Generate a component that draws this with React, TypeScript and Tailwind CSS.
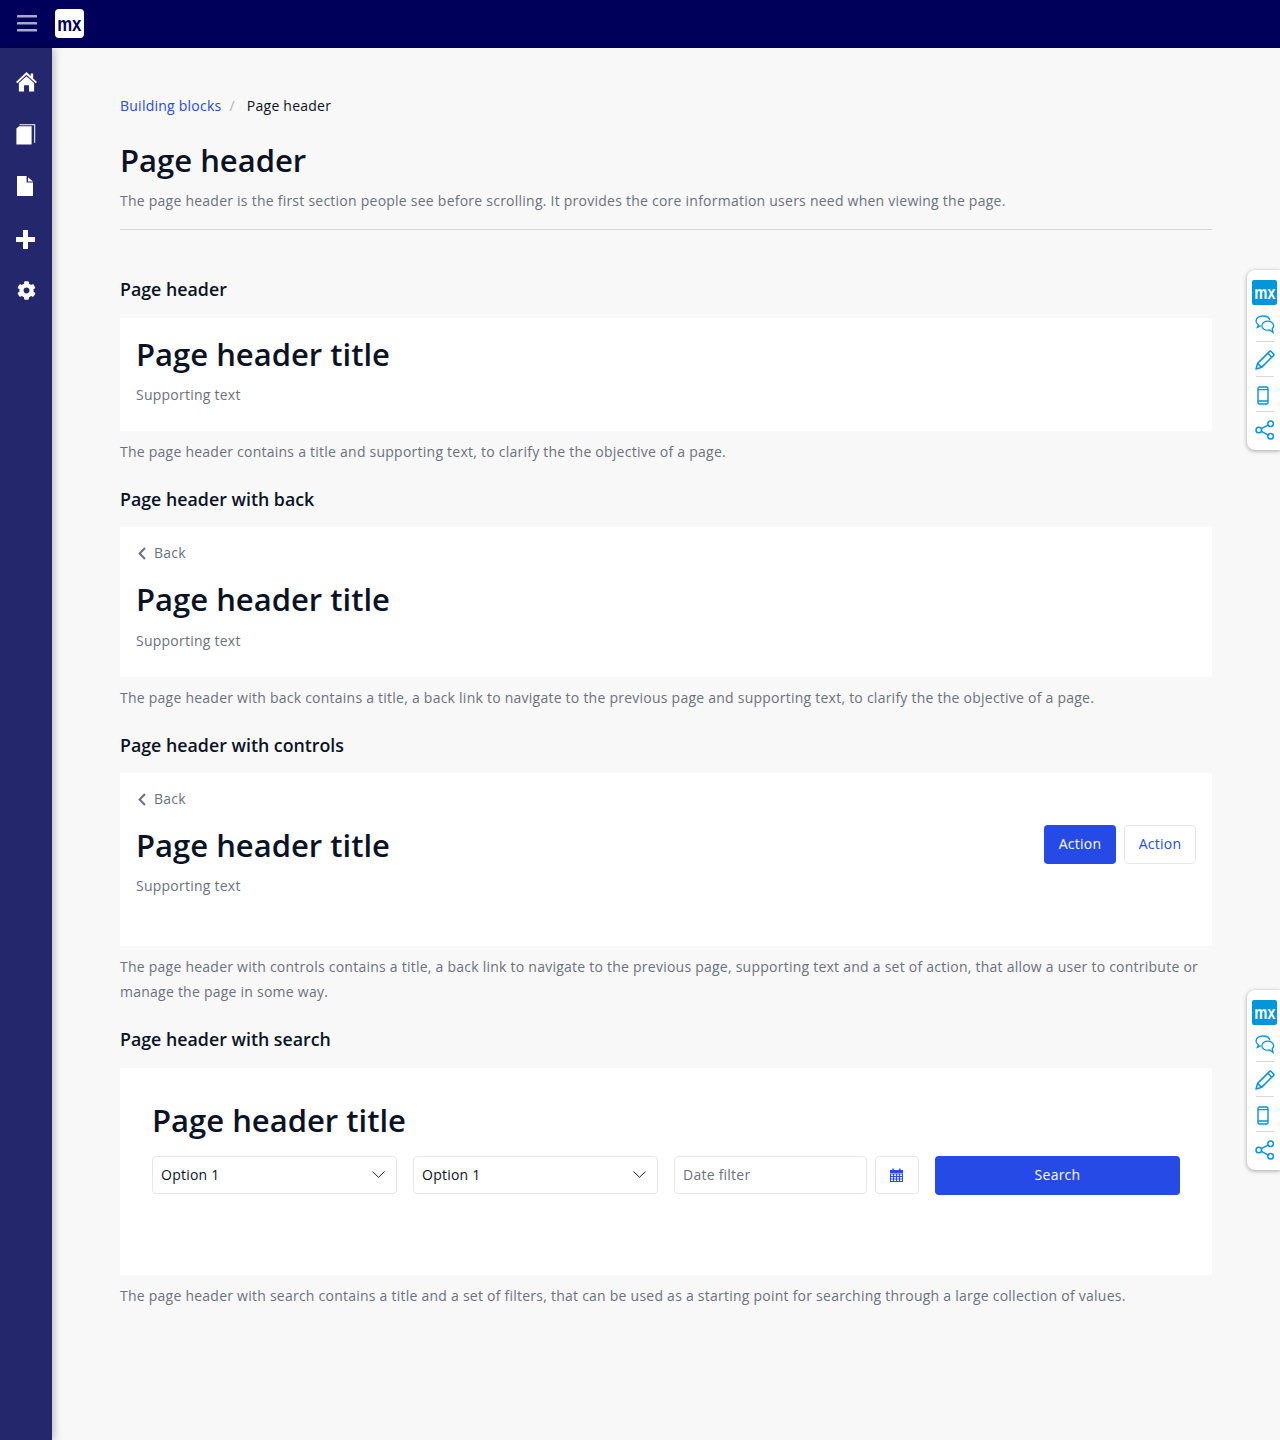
import { FaCog } from "react-icons/fa";

const MxLogo = ({ className, textClass }: { className: string; textClass: string }) => (
  <div className={className}>
    <span className={`font-['Liberation_Sans',sans-serif] font-bold tracking-[-0.3px] ${textClass}`}>mx</span>
  </div>
);

function MenuIcon() {
  return (
    <svg width="20" height="17" viewBox="0 0 20 17" fill="#a9a9c9">
      <rect y="0" width="20" height="2.6" rx="0.6" />
      <rect y="7" width="20" height="2.6" rx="0.6" />
      <rect y="14" width="20" height="2.6" rx="0.6" />
    </svg>
  );
}

function HomeIcon() {
  return (
    <svg width="21" height="20" viewBox="0 0 22 21" fill="#ffffff">
      <path d="M11 0 15.4 4.2V1.6H18V6.7L22 10.6 20.6 11.8 11 3 1.4 11.8 0 10.6Z" />
      <path d="M11 4.4 19 11.6V20.6H13.6V14H8.4V20.6H3V11.6Z" />
    </svg>
  );
}

function BookIcon() {
  return (
    <svg width="20" height="21" viewBox="0 0 20 21" fill="#ffffff">
      <path d="M0.4 4.6 3 2.2H15.6V20.6H0.4Z" />
      <path d="M3.6 0.3H19.2V18.4L18.2 19.2V1.2H3.6Z" />
    </svg>
  );
}

function FileIcon() {
  return (
    <svg width="16" height="20" viewBox="0 0 16 20" fill="#ffffff">
      <path d="M0 0H9.6V6.4H16V20H0Z" />
      <path d="M11 1.2 16 5.4H11Z" />
    </svg>
  );
}

function PlusIcon() {
  return (
    <svg width="19" height="19" viewBox="0 0 19 19" fill="#ffffff">
      <path d="M7 0H12V7H19V12H12V19H7V12H0V7H7Z" />
    </svg>
  );
}

function CalendarIcon() {
  return (
    <svg width="13" height="14" viewBox="0 0 13 14" fill="#264ae5">
      <path d="M0 2h2.4V.4h1.4V2h5.4V.4h1.4V2H13v3H0Z" />
      <path fillRule="evenodd" d="M0 5.6h13V14H0ZM1 6.6V8h2V6.6ZM4 6.6V8h2V6.6ZM7 6.6V8h2V6.6ZM10 6.6V8h2V6.6ZM1 9V10.4h2V9ZM4 9V10.4h2V9ZM7 9V10.4h2V9ZM10 9V10.4h2V9ZM1 11.4V12.9h2V11.4ZM4 11.4V12.9h2V11.4ZM7 11.4V12.9h2V11.4ZM10 11.4V12.9h2V11.4Z" />
    </svg>
  );
}

function FeedbackWidget({ top }: { top: string }) {
  return (
    <div className={`absolute right-0 ${top} flex h-[180px] w-[33px] flex-col items-center rounded-l-lg bg-white pt-[10px] shadow-[0_1px_4px_rgba(0,0,0,0.35)]`}>
      <MxLogo
        className="ml-[2px] flex h-[25px] w-[25px] shrink-0 items-center justify-center rounded-[2px] bg-[#0595db] text-white"
        textClass="inline-block origin-center scale-x-[0.82] text-[18px] leading-none"
      />
      <svg className="mt-[10px] ml-[2px]" width="20" height="20" viewBox="0 0 20 20" fill="none" stroke="#0595db" strokeWidth="1.3">
        <path d="M8 1C4 1 1 3.2 1 6c0 1.6 1 3 2.4 3.8L2.4 12.4l3.4-1.8" />
        <path d="M8 1c3.6 0 6.4 1.8 6.9 4.4" />
        <path d="M12.6 6.2c-3.2 0-5.7 2-5.7 4.5s2.5 4.5 5.7 4.5c.7 0 1.3-.1 1.9-.3l3.6 2.6-1-3.8c1-.8 1.6-1.9 1.6-3 0-2.5-2.8-4.5-6.1-4.5Z" />
      </svg>
      <div className="mt-[6px] ml-[2px] h-px w-[18px] shrink-0 bg-[#d8d8d8]" />
      <svg className="mt-[8px] ml-[2px]" width="20" height="20" viewBox="0 0 20 20" fill="none" stroke="#0595db" strokeWidth="1.5" strokeLinejoin="round">
        <path d="M1 19 2.6 13.4 14.6 1.4a1 1 0 0 1 1.4 0l2.6 2.6a1 1 0 0 1 0 1.4L6.6 17.4Z" />
        <path d="M2.6 13.4 6.6 17.4M12.8 3.2l4 4" />
      </svg>
      <div className="mt-[6px] ml-[2px] h-px w-[18px] shrink-0 bg-[#d8d8d8]" />
      <svg className="mt-[9px] mr-[1px]" width="12" height="19" viewBox="0 0 12 19" fill="none" stroke="#0595db" strokeWidth="1.4">
        <rect x="1" y="1" width="10" height="17" rx="1.5" />
        <path d="M1 3.6H11M1 15H11" />
      </svg>
      <div className="mt-[6px] ml-[2px] h-px w-[18px] shrink-0 bg-[#d8d8d8]" />
      <svg className="mt-[8px] ml-[2px]" width="20" height="20" viewBox="0 0 20 20" fill="none" stroke="#0595db" strokeWidth="1.5">
        <circle cx="3.8" cy="10" r="2.8" />
        <circle cx="15.6" cy="3.8" r="2.8" />
        <circle cx="15.6" cy="16.2" r="2.8" />
        <path d="M6.3 8.7 13.1 5.1M6.3 11.3l6.8 3.6" />
      </svg>
    </div>
  );
}

function SectionTitle({ children, className }: { children: string; className: string }) {
  return <h2 className={`text-[17.8px] leading-[25px] font-semibold tracking-normal text-[#0a1325] ${className}`}>{children}</h2>;
}

function Description({ children }: { children: string }) {
  return <p className="mt-[8px] text-[14px] leading-[25px] text-[#6c717e]">{children}</p>;
}

function Back() {
  return (
    <div className="flex h-[20px] items-center text-[14px] text-[#6c717e]">
      <svg className="mr-[8px] ml-[2px]" width="8" height="13" viewBox="0 0 8 13" fill="none" stroke="#6c717e" strokeWidth="2">
        <path d="M7 1 1.6 6.5 7 12" />
      </svg>
      <span className="-mt-[2px]">Back</span>
    </div>
  );
}

function PageTitle() {
  return <div className="text-[31px] leading-[40px] font-semibold tracking-normal text-[#0a1325]">Page header title</div>;
}

function Supporting({ className }: { className: string }) {
  return <div className={`text-[14px] leading-[25px] text-[#6c717e] ${className}`}>Supporting text</div>;
}

function SelectBox() {
  return (
    <div className="flex h-[38px] w-[245px] items-center justify-between rounded-[4px] border border-[#e7e7e9] bg-white pr-[11px] pb-[2px] pl-[8px] text-[14px] text-[#0a1325]">
      Option 1
      <svg width="13" height="7" viewBox="0 0 13 7" fill="none" stroke="#222222" strokeWidth="1">
        <path d="M.5 .5 6.5 6.3 12.5 .5" />
      </svg>
    </div>
  );
}

export default function App() {
  return (
    <div className="relative flex h-[1440px] flex-col overflow-hidden bg-[#f8f8f8] font-['Open_Sans',sans-serif] tracking-[0.24px]">
      <header className="flex h-[48px] shrink-0 items-center bg-[#00005a]">
        <div className="flex w-[55px] justify-center pr-[1px]">
          <div className="mt-[-2px] flex"><MenuIcon /></div>
        </div>
        <MxLogo
          className="mt-[-1px] flex h-[29px] w-[29px] items-center justify-center rounded-[4px] bg-white text-[#00005a]"
          textClass="inline-block origin-center scale-x-[0.84] text-[20px] leading-none"
        />
      </header>
      <div className="flex min-h-0 flex-1">
        <nav className="flex w-[52px] shrink-0 flex-col items-center bg-[#24276c] pt-[22px] text-white shadow-[2px_0_8px_rgba(0,0,0,0.25)]">
          <div className="flex h-[24px] items-center"><HomeIcon /></div>
          <div className="mt-[28px] flex h-[24px] items-center"><BookIcon /></div>
          <div className="mt-[28px] flex h-[24px] items-center pr-[3px]"><FileIcon /></div>
          <div className="mt-[29px] flex h-[24px] items-center pr-[2px]"><PlusIcon /></div>
          <div className="mt-[27px] flex h-[24px] items-center"><FaCog size={19} /></div>
        </nav>
        <main className="flex-1 px-[68px] pt-[45px]">
          <div className="flex h-[24px] items-center text-[14px]">
            <span className="text-[#264ae5]">Building blocks</span>
            <span className="ml-[8px] text-[#b0b2b8]">/</span>
            <span className="ml-[12px] text-[#0a1325]">Page header</span>
          </div>
          <h1 className="mt-[23px] text-[31px] leading-[40px] font-semibold tracking-normal text-[#0a1325]">Page header</h1>
          <p className="mt-[8px] text-[14px] leading-[25px] text-[#6c717e]">
            The page header is the first section people see before scrolling. It provides the core information users need when viewing the page.
          </p>
          <div className="mt-[16px] h-px bg-[#d4d4d6]" />

          <SectionTitle className="mt-[47px]">Page header</SectionTitle>
          <section className="mt-[16px] h-[113px] bg-white px-[16px] pt-[16px]">
            <PageTitle />
            <Supporting className="mt-[8px]" />
          </section>
          <Description>The page header contains a title and supporting text, to clarify the the objective of a page.</Description>

          <SectionTitle className="mt-[23px]">Page header with back</SectionTitle>
          <section className="mt-[15px] h-[150px] bg-white px-[16px] pt-[16px]">
            <Back />
            <div className="mt-[16px]"><PageTitle /></div>
            <Supporting className="mt-[9px]" />
          </section>
          <Description>The page header with back contains a title, a back link to navigate to the previous page and supporting text, to clarify the the objective of a page.</Description>

          <SectionTitle className="mt-[23px]">Page header with controls</SectionTitle>
          <section className="mt-[15px] h-[173px] bg-white px-[16px] pt-[16px]">
            <Back />
            <div className="mt-[16px] flex items-start justify-between">
              <div>
                <PageTitle />
                <Supporting className="mt-[8px]" />
              </div>
              <div className="flex gap-[8px] text-[14px]">
                <div className="flex h-[39px] w-[72px] items-center justify-center rounded-[4px] bg-[#264ae5] pb-[2px] text-white">Action</div>
                <div className="flex h-[39px] w-[72px] items-center justify-center rounded-[4px] border border-[#e7e7e9] bg-white pb-[2px] text-[#264ae5]">Action</div>
              </div>
            </div>
          </section>
          <Description>The page header with controls contains a title, a back link to navigate to the previous page, supporting text and a set of action, that allow a user to contribute or manage the page in some way.</Description>

          <SectionTitle className="mt-[23px]">Page header with search</SectionTitle>
          <section className="mt-[16px] h-[207px] bg-white px-[32px] pt-[32px]">
            <PageTitle />
            <div className="mt-[16px] flex gap-[16px]">
              <SelectBox />
              <SelectBox />
              <div className="flex gap-[8px]">
                <div className="flex h-[38px] w-[193px] items-center rounded-[4px] border border-[#e7e7e9] bg-white pb-[2px] pl-[8px] text-[14px] text-[#6c717e]">Date filter</div>
                <div className="flex h-[38px] w-[44px] items-center justify-center rounded-[4px] border border-[#e7e7e9] bg-white pr-[2px]"><CalendarIcon /></div>
              </div>
              <div className="flex h-[39px] w-[245px] items-center justify-center rounded-[4px] bg-[#264ae5] pb-[2px] text-[14px] text-white">Search</div>
            </div>
          </section>
          <Description>The page header with search contains a title and a set of filters, that can be used as a starting point for searching through a large collection of values.</Description>
        </main>
      </div>
      <FeedbackWidget top="top-[270px]" />
      <FeedbackWidget top="top-[990px]" />
    </div>
  );
}
